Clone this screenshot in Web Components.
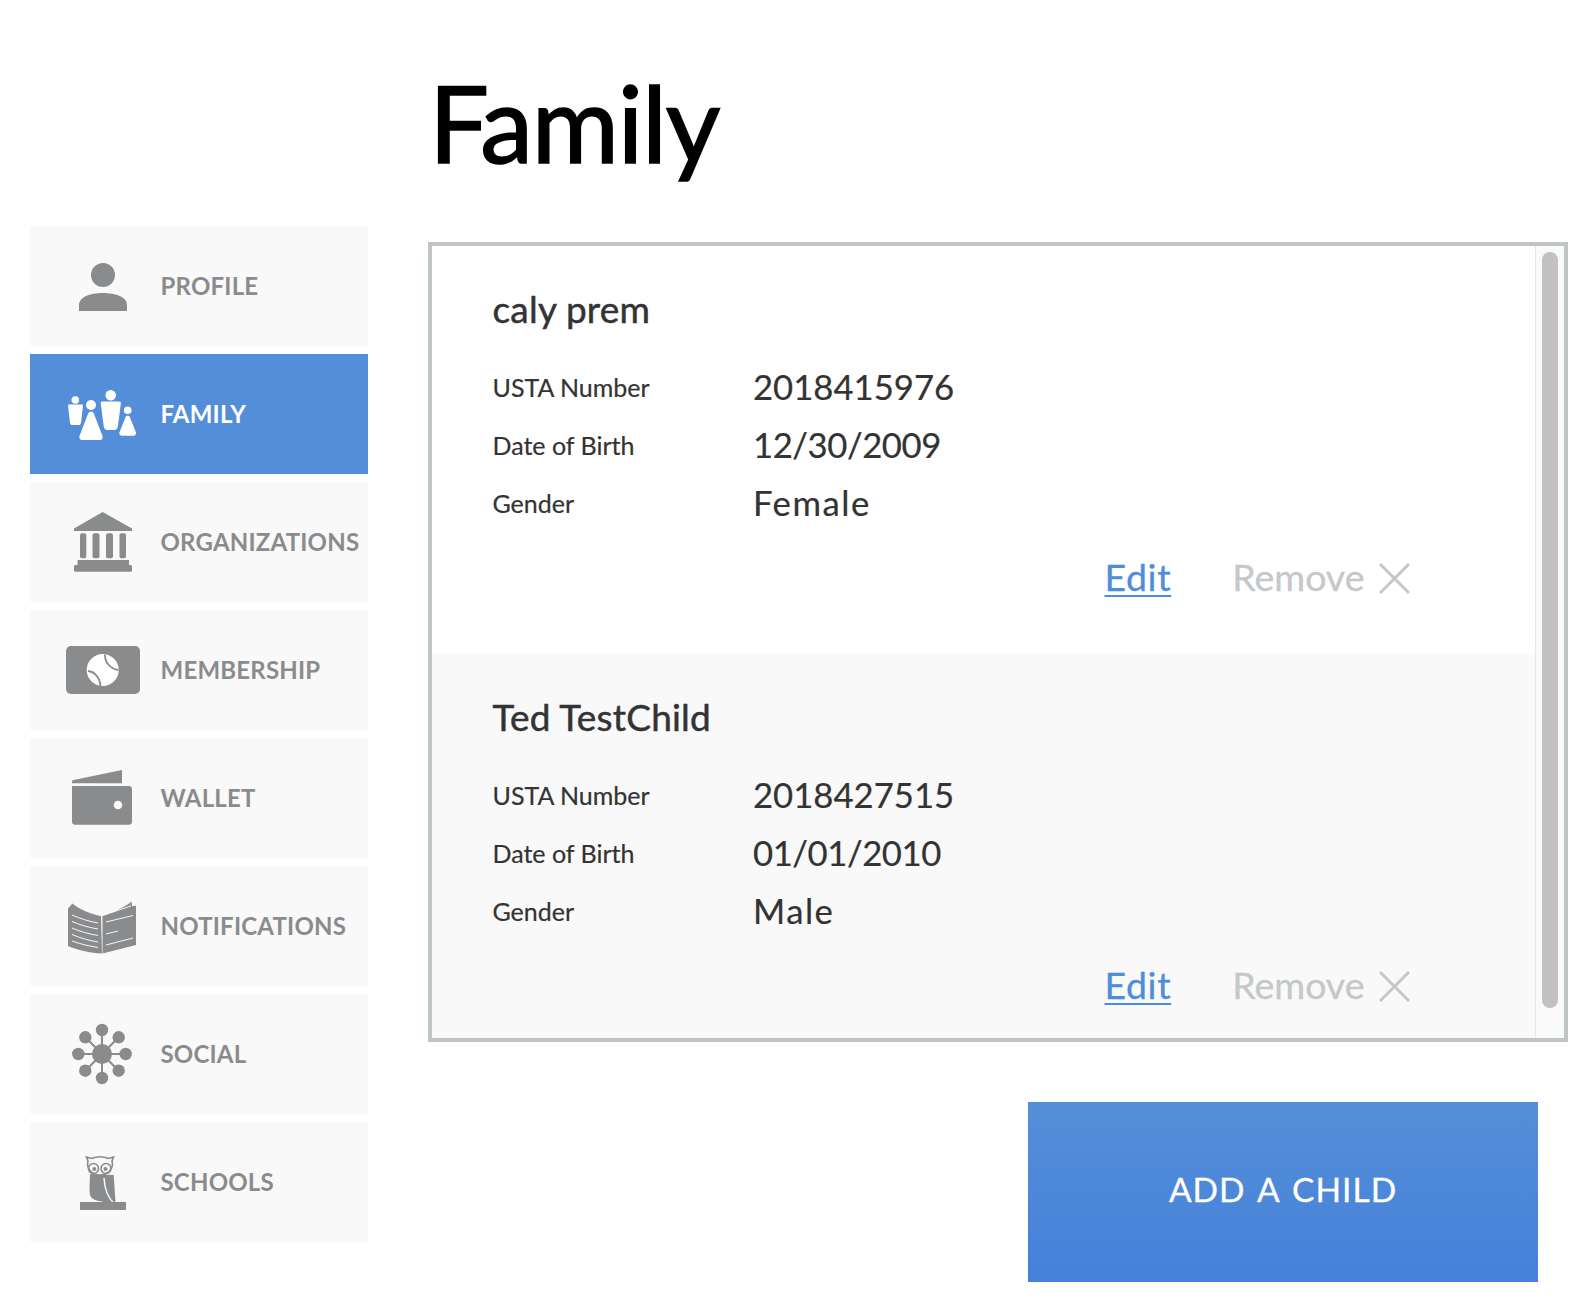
<!DOCTYPE html>
<html>
<head>
<meta charset="utf-8">
<title>Family</title>
<style>
    html, body { margin: 0; background: #fff; }
    body { font-family: Lato, "Open Sans", sans-serif; color: #333; }
    svg { display: block; }
</style>
</head>
<body>
<family-page>
    <nav-item slot="nav" label="PROFILE">
        <svg slot="icon" width="132" height="120" viewBox="0 0 132 120" fill="#8a8b8d">
            <circle cx="73" cy="49" r="12"/>
            <path d="M49 85v-6c0-8 11-12 24-12s24 4 24 12v6z"/>
        </svg>
    </nav-item>
    <nav-item slot="nav" label="FAMILY" active>
        <svg slot="icon" width="132" height="120" viewBox="0 0 132 120" fill="#fff">
            <circle cx="45.3" cy="46" r="3.8"/>
            <path d="M39 50.5h13c.8 0 1 .6.9 1.4l-1.8 16.6c-.2 1.7-1.2 2.6-2.7 2.6h-5.8c-1.5 0-2.5-.9-2.7-2.6l-1.8-16.6c-.1-.8.1-1.4.9-1.4z"/>
            <circle cx="61" cy="51" r="5"/>
            <path d="M61 57.5c1.5 0 2.4 1 3 2.5l8.5 22c.7 2-.5 4-2.6 4H52.100c-2.100 0-3.300-2-2.600-4l8.500-22c.6-1.500 1.500-2.500 3-2.500z"/>
            <circle cx="80.700" cy="41.300" r="5.300"/>
            <path d="M72 47.500h17.500c1 0 1.500.7 1.400 1.800l-3 23c-.3 2.400-1.600 3.700-3.700 3.700h-6.800c-2.100 0-3.400-1.300-3.700-3.700l-3-23c-.1-1.100.4-1.800 1.300-1.800z"/>
            <circle cx="97.700" cy="56.300" r="3.800"/>
            <path d="M97.700 61.500c1 0 1.700.7 2.200 1.800l6 15c.6 1.700-.3 3.400-2 3.400H91.500c-1.700 0-2.600-1.700-2-3.400l6-15c.5-1.100 1.200-1.800 2.200-1.800z"/>
        </svg>
    </nav-item>
    <nav-item slot="nav" label="ORGANIZATIONS">
        <svg slot="icon" width="132" height="120" viewBox="0 0 132 120" fill="#8a8b8d">
            <path d="M72.700 30 102 46.500V49H44v-2.500z"/>
            <rect x="50" y="51.300" width="6.300" height="25" rx="2"/>
            <rect x="62.500" y="51.300" width="7" height="25" rx="2"/>
            <rect x="76" y="51.300" width="7" height="25" rx="2"/>
            <rect x="89.500" y="51.300" width="6.500" height="25" rx="2"/>
            <rect x="47.500" y="78" width="51.500" height="6"/>
            <rect x="44" y="83" width="58" height="6.700" rx="1.500"/>
        </svg>
    </nav-item>
    <nav-item slot="nav" label="MEMBERSHIP">
        <svg slot="icon" width="132" height="120" viewBox="0 0 132 120">
            <rect x="36" y="36" width="74" height="48" rx="5" fill="#8a8b8d"/>
            <circle cx="72.700" cy="60" r="16" fill="#fff"/>
            <path d="M75 44.500c-.5 7 5 14.500 13.500 15.500M58 61c6 .5 12 6 12.500 15" fill="none" stroke="#8a8b8d" stroke-width="1.800"/>
        </svg>
    </nav-item>
    <nav-item slot="nav" label="WALLET">
        <svg slot="icon" width="132" height="120" viewBox="0 0 132 120" fill="#8a8b8d">
            <path d="M42 43.500c0-1 .5-1.300 1.500-1.500L92 32v13.300H42z"/>
            <path d="M42 48h57c1.700 0 3 1.300 3 3v32.700c0 1.700-1.300 3-3 3H45c-1.700 0-3-1.300-3-3z"/>
            <circle cx="88" cy="67" r="4.300" fill="#f9f9f9"/>
        </svg>
    </nav-item>
    <nav-item slot="nav" label="NOTIFICATIONS">
        <svg slot="icon" width="132" height="120" viewBox="0 0 132 120">
            <path d="M38 42.500l4.500-5c7 6 18 10.500 28.500 12.500l1 37.500C60 87 47 84 38 80zM72.500 50c10-2.500 20-8 29.200-14.500l.3 4.500 4-.2V79l-33.500 8.500z" fill="#8a8b8d"/>
            <path d="M42 49c8 3.500 17 6.500 26 8M42 55.500c8 3.500 17 6 26 7.500M42 62c8 3.500 17 6 26 7.500M42 68.500c8 3.500 17 6 26 7.500M42 75c8 3 17 5 26 6.500M76 56l27-6.500M76 68l12-3M76 79l27-7M80 47l21-7" fill="none" stroke="#f9f9f9" stroke-width="1"/>
        </svg>
    </nav-item>
    <nav-item slot="nav" label="SOCIAL">
        <svg slot="icon" width="132" height="120" viewBox="0 0 132 120" fill="#8a8b8d" stroke="#8a8b8d">
            <path d="M72 36v48M48.300 60h47.400M55.300 43.300l33.400 33.400M88.700 43.300 55.300 76.700" stroke-width="2" fill="none"/>
            <g stroke="none">
                <circle cx="72" cy="60" r="10"/>
                <circle cx="72" cy="36" r="6.200"/>
                <circle cx="72" cy="84" r="6.200"/>
                <circle cx="48.300" cy="60" r="6.200"/>
                <circle cx="95.700" cy="60" r="6.200"/>
                <circle cx="55.300" cy="43.300" r="6.200"/>
                <circle cx="88.700" cy="43.300" r="6.200"/>
                <circle cx="55.300" cy="76.700" r="6.200"/>
                <circle cx="88.700" cy="76.700" r="6.200"/>
            </g>
        </svg>
    </nav-item>
    <nav-item slot="nav" label="SCHOOLS">
        <svg slot="icon" width="132" height="120" viewBox="0 0 132 120">
            <path d="M60 52c-.3 8-.6 14-.3 19 .4 5 4 7.600 12 8.500l14 3.500-2-30z" fill="#8a8b8d"/>
            <path d="M74 56c.5 10 3 19 10.500 26" fill="none" stroke="#f9f9f9" stroke-width="1.500"/>
            <rect x="50" y="80" width="46" height="8" fill="#8a8b8d"/>
            <path d="M77 82l7 2" stroke="#8a8b8d" stroke-width="2"/>
            <path d="M56.500 35l5 1.500c5-2 12-2 17 0l5-1.500-1.500 4c2 6-3 14-12 14s-14-8-12-14z" fill="#f9f9f9" stroke="#8a8b8d" stroke-width="1.600"/>
            <circle cx="63.500" cy="46.500" r="5" fill="none" stroke="#8a8b8d" stroke-width="1.600"/>
            <circle cx="76" cy="46.500" r="5" fill="none" stroke="#8a8b8d" stroke-width="1.600"/>
            <circle cx="64.300" cy="47" r="2" fill="#8a8b8d"/>
            <circle cx="75.500" cy="47" r="2" fill="#8a8b8d"/>
        </svg>
    </nav-item>

    <scroll-panel slot="panel">
        <child-card name="caly prem" number="2018415976" dob="12/30/2009" gender="Female"></child-card>
        <child-card name="Ted TestChild" number="2018427515" dob="01/01/2010" gender="Male" shaded></child-card>
    </scroll-panel>
    <big-button slot="action">ADD A CHILD</big-button>
</family-page>

<script>
class FamilyPage extends HTMLElement {
    constructor() {
        super()
        this.attachShadow({ mode: 'open' })
        this.shadowRoot.innerHTML = `
            <style>
                :host { display: flex; height: 1314px; overflow: hidden; }
                aside {
                    width: 338px;
                    margin: 0 60px 0 30px;
                    padding-top: 226px;
                    display: flex;
                    flex-direction: column;
                    gap: 8px;
                }
                main { width: 1140px; display: flex; flex-direction: column; }
                h1 {
                    margin: 0;
                    height: 242px;
                    box-sizing: border-box;
                    padding: 59px 0 0 1px;
                    font-size: 106px;
                    line-height: 126px;
                    font-weight: 400;
                    color: #000;
                    letter-spacing: -1.2px;
                    -webkit-text-stroke: 1.6px #000;
                }
                .foot { display: flex; justify-content: flex-end; padding: 60px 30px 0 0; }
            </style>
            <aside><slot name="nav"></slot></aside>
            <main>
                <h1>Family</h1>
                <slot name="panel"></slot>
                <div class="foot"><slot name="action"></slot></div>
            </main>
        `
    }
}

class NavItem extends HTMLElement {
    constructor() {
        super()
        this.attachShadow({ mode: 'open' })
        this.shadowRoot.innerHTML = `
            <style>
                :host {
                    display: flex;
                    align-items: center;
                    height: 120px;
                    background: #f9f9f9;
                    color: #8a8b8d;
                }
                :host([active]) { background: #558ed8; color: #fff; }
                .icon { width: 130.5px; height: 120px; flex: none; }
                span { font-size: 24px; font-weight: 700; white-space: nowrap; letter-spacing: .2px; padding-bottom: 2px; }
            </style>
            <div class="icon"><slot name="icon"></slot></div>
            <span></span>
        `
    }

    connectedCallback() {
        this.shadowRoot.querySelector('span').textContent = this.getAttribute('label')
    }
}

class ScrollPanel extends HTMLElement {
    constructor() {
        super()
        this.attachShadow({ mode: 'open' })
        this.shadowRoot.innerHTML = `
            <style>
                :host {
                    display: flex;
                    height: 800px;
                    box-sizing: border-box;
                    border: 4px solid #bfc4c7;
                    overflow: hidden;
                }
                .content { flex: 1; min-width: 0; height: 1000px; }
                .track {
                    width: 29px;
                    flex: none;
                    box-sizing: border-box;
                    background: #fafafa;
                    border-left: 1px solid #e8e8e8;
                    padding: 6px 0 0 6px;
                }
                .thumb { width: 16px; height: 756px; border-radius: 8px; background: #c1c1c1; }
            </style>
            <div class="content"><slot></slot></div>
            <div class="track"><div class="thumb"></div></div>
        `
    }
}

class ChildCard extends HTMLElement {
    constructor() {
        super()
        this.attachShadow({ mode: 'open' })
        this.shadowRoot.innerHTML = `
            <style>
                :host { display: block; height: 408px; box-sizing: border-box; padding: 40px 125.5px 0 60.5px; background: #fff; }
                :host([shaded]) { background: #f9f9f9; }
                h2 { margin: 0 0 26.5px; font-size: 37px; line-height: 46px; font-weight: 400; color: #333; letter-spacing: .2px; -webkit-text-stroke: .5px #333; }
                .row { display: flex; align-items: center; height: 58px; }
                .label { width: 260.5px; font-size: 25px; color: #333; padding-bottom: 2px; -webkit-text-stroke: .2px #333; }
                .value { font-size: 34.7px; color: #333; padding-bottom: 2.5px; -webkit-text-stroke: .2px #333; }
                .dob { letter-spacing: -.45px; }
                .gender { letter-spacing: 1.5px; }
                .actions { display: flex; justify-content: flex-end; align-items: center; height: 60px; margin-top: 14px; font-size: 37.5px; -webkit-text-stroke: .3px; }
                a { color: #4f8ddb; text-decoration: underline; text-decoration-thickness: 2px; text-underline-offset: 4px; margin-right: 61px; letter-spacing: .6px; }
                .remove { color: #c5c8ca; margin-right: 14px; }
                svg { display: block; margin-top: 4px; }
            </style>
            <h2></h2>
            <div class="row"><div class="label">USTA Number</div><div class="value number"></div></div>
            <div class="row"><div class="label">Date of Birth</div><div class="value dob"></div></div>
            <div class="row"><div class="label">Gender</div><div class="value gender"></div></div>
            <div class="actions">
                <a href="#">Edit</a>
                <span class="remove">Remove</span>
                <svg width="31" height="31" viewBox="0 0 31 31"><path d="M1 1l29 29M30 1 1 30" stroke="#c5c8ca" stroke-width="3" fill="none"/></svg>
            </div>
        `
    }

    connectedCallback() {
        const root = this.shadowRoot
        root.querySelector('h2').textContent = this.getAttribute('name')
        root.querySelector('.number').textContent = this.getAttribute('number')
        root.querySelector('.dob').textContent = this.getAttribute('dob')
        root.querySelector('.gender').textContent = this.getAttribute('gender')
    }
}

class BigButton extends HTMLElement {
    constructor() {
        super()
        this.attachShadow({ mode: 'open' })
        this.shadowRoot.innerHTML = `
            <style>
                :host {
                    display: flex;
                    align-items: center;
                    justify-content: center;
                    box-sizing: border-box;
                    padding-bottom: 6px;
                    width: 510px;
                    height: 180px;
                    background: linear-gradient(#558ed8, #4581da);
                    color: #fff;
                    font-size: 33.5px;
                    letter-spacing: 1px;
                    word-spacing: 3px;
                    -webkit-text-stroke: .3px #fff;
                    cursor: pointer;
                }
            </style>
            <slot></slot>
        `
    }
}

customElements.define('family-page', FamilyPage)
customElements.define('nav-item', NavItem)
customElements.define('scroll-panel', ScrollPanel)
customElements.define('child-card', ChildCard)
customElements.define('big-button', BigButton)
</script>
</body>
</html>
